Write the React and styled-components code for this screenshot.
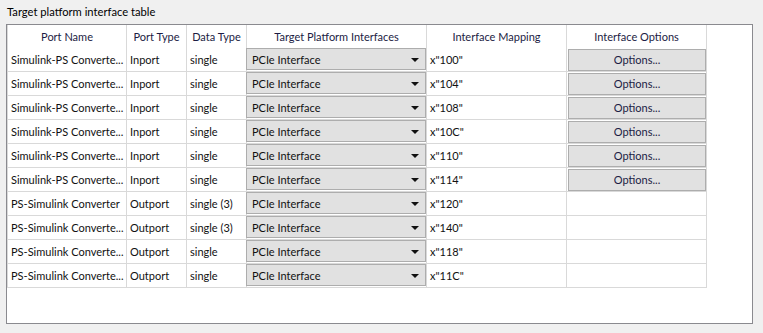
import React from "react";
import styled, { createGlobalStyle } from "styled-components";

const Global = createGlobalStyle`
  html, body { margin: 0; padding: 0; background: #f0f0f0; }
  body { font-family: Lato, "Noto Sans", sans-serif; font-size: 11px; color: #111; }
`;

const Page = styled.div`
  width: 763px;
  height: 333px;
  box-sizing: border-box;
  padding: 4px 11px 0 6px;
  display: flex;
  flex-direction: column;
`;

const Title = styled.div`
  height: 20px;
  line-height: 16px;
  padding-left: 1px;
  font-size: 11.2px;
  color: #000;
`;

const Panel = styled.div`
  width: 747px;
  height: 300px;
  box-sizing: border-box;
  border: 1px solid #8a8a8f;
  background: #fff;
  overflow: hidden;
`;

const Grid = styled.div`
  display: grid;
  grid-template-columns: 119px 60px 60px 180px 140px 140px;
  width: max-content;
  border-left: 1px solid #d9d9d9;
`;

const HeadCell = styled.div`
  height: 23px;
  line-height: 23px;
  text-align: center;
  border-right: 1px solid #d9d9d9;
  color: #1c1c44;
  white-space: nowrap;
  overflow: hidden;
`;

const Cell = styled.div`
  height: 23px;
  line-height: 23px;
  padding: 0 3px;
  border-right: 1px solid #d9d9d9;
  border-bottom: 1px solid #d9d9d9;
  white-space: nowrap;
  overflow: hidden;
  color: #111;
`;

const ControlCell = styled(Cell)`
  padding: 0;
  overflow: visible;
  display: flex;
  align-items: flex-start;
`;

const Combo = styled.div`
  margin-left: -1px;
  width: 180px;
  height: 22px;
  box-sizing: border-box;
  border: 1px solid #adadad;
  background: #e1e1e1;
  display: flex;
  align-items: center;
  justify-content: space-between;
  padding: 0 6px 0 5px;
  color: #111;
`;

const Arrow = styled.span`
  width: 0;
  height: 0;
  border-left: 4px solid transparent;
  border-right: 4px solid transparent;
  border-top: 4px solid #111;
  margin-top: 1px;
`;

const Button = styled.div`
  margin: 1px 0 0 1px;
  width: 138px;
  height: 22px;
  box-sizing: border-box;
  border: 1px solid #adadad;
  background: #e1e1e1;
  text-align: center;
  line-height: 20px;
  color: #1c1c44;
`;

const headers = [
  "Port Name",
  "Port Type",
  "Data Type",
  "Target Platform Interfaces",
  "Interface Mapping",
  "Interface Options",
];

const rows = [
  ["Simulink-PS Converte...", "Inport", "single", 'x"100"', true],
  ["Simulink-PS Converte...", "Inport", "single", 'x"104"', true],
  ["Simulink-PS Converte...", "Inport", "single", 'x"108"', true],
  ["Simulink-PS Converte...", "Inport", "single", 'x"10C"', true],
  ["Simulink-PS Converte...", "Inport", "single", 'x"110"', true],
  ["Simulink-PS Converte...", "Inport", "single", 'x"114"', true],
  ["PS-Simulink Converter", "Outport", "single (3)", 'x"120"', false],
  ["PS-Simulink Converte...", "Outport", "single (3)", 'x"140"', false],
  ["PS-Simulink Converte...", "Outport", "single", 'x"118"', false],
  ["PS-Simulink Converte...", "Outport", "single", 'x"11C"', false],
];

export default function App() {
  return (
    <>
      <Global />
      <Page>
        <Title>Target platform interface table</Title>
        <Panel>
          <Grid>
            {headers.map((h) => (
              <HeadCell key={h}>{h}</HeadCell>
            ))}
            {rows.map(([name, type, dt, map, opt], i) => (
              <React.Fragment key={i}>
                <Cell>{name}</Cell>
                <Cell>{type}</Cell>
                <Cell>{dt}</Cell>
                <ControlCell>
                  <Combo>
                    <span>PCIe Interface</span>
                    <Arrow />
                  </Combo>
                </ControlCell>
                <Cell>{map}</Cell>
                <ControlCell>{opt ? <Button>Options...</Button> : null}</ControlCell>
              </React.Fragment>
            ))}
          </Grid>
        </Panel>
      </Page>
    </>
  );
}
